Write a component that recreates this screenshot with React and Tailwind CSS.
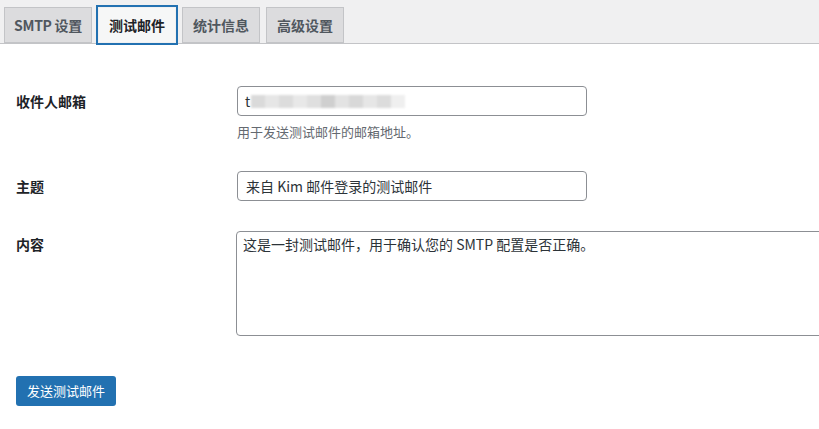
import React from 'react';

const font = { fontFamily: '"Noto Sans CJK SC", "Noto Sans", sans-serif' };

const tabs = ['SMTP 设置', '测试邮件', '统计信息', '高级设置'];

// blurred chunk shades for the masked address
const masked = ['#dadada', '#e6e6e6', '#dcdcdc', '#e8e8e8', '#dfdfdf', '#cfcfcf', '#e3e3e3', '#d8d8d8', '#e6e6e6', '#dcdcdc', '#efefef'];

const Tab = ({ label, active, first }) => (
  <div
    className={
      'h-[36px] flex items-center justify-center whitespace-nowrap text-[14px] font-semibold border border-[#c3c4c7] ' +
      (first ? 'w-[88px] px-0 tracking-[-0.3px] ' : 'px-[10px] ') +
      (active
        ? 'bg-[#f6f7f7] text-[#1d2327] border-[#f0f0f1] ring-2 ring-[#2271b1]'
        : 'bg-[#dcdcde] text-[#50575e]')
    }
  >
    {label}
  </div>
);

export default function App() {
  return (
    <div className="w-full min-h-screen bg-white overflow-hidden" style={font}>
      {/* Tabs */}
      <div className="bg-[#f0f0f1] border-b border-[#c3c4c7] pt-[7px] pl-[4px] flex gap-[6px]">
        {tabs.map((t, i) => (
          <Tab key={t} label={t} active={i === 1} first={i === 0} />
        ))}
      </div>

      {/* Form */}
      <div className="pl-4 pt-[42px] grid grid-cols-[221px_1fr] items-start">
        <div className="text-[14px] font-semibold text-[#1d2327] leading-[30px]">收件人邮箱</div>
        <div>
          <div className="w-[350px] h-[30px] border border-[#8c8f94] rounded-[4px] px-[7px] flex items-center text-[14px] text-[#2c3338]">
            <span>t</span>
            <span className="flex h-[13px] blur-[1px] ml-[1px]">
              {masked.map((c, i) => (
                <span key={i} className="w-[14px] h-full" style={{ backgroundColor: c }} />
              ))}
            </span>
          </div>
          <div className="mt-[6px] text-[13px] leading-[20px] text-[#646970]">用于发送测试邮件的邮箱地址。</div>
        </div>

        <div className="mt-[29px] text-[14px] font-semibold text-[#1d2327] leading-[30px]">主题</div>
        <div className="mt-[29px]">
          <input
            readOnly
            value="来自 Kim 邮件登录的测试邮件"
            className="w-[350px] h-[30px] border border-[#8c8f94] rounded-[4px] px-[8px] text-[14px] text-[#2c3338] outline-none"
            style={font}
          />
        </div>

        <div className="mt-[30px] text-[14px] font-semibold text-[#1d2327] leading-[26px]">内容</div>
        <div className="mt-[30px] -ml-px">
          <textarea
            readOnly
            value="这是一封测试邮件，用于确认您的 SMTP 配置是否正确。"
            className="block w-[640px] h-[105px] border border-[#8c8f94] rounded-[4px] px-[6px] py-[2px] text-[14px] leading-[20px] text-[#2c3338] resize-none outline-none"
            style={font}
          />
        </div>
      </div>

      <div className="pl-4 mt-[40px]">
        <button className="w-[100px] h-[30px] rounded-[3px] bg-[#2271b1] text-white text-[13px]">发送测试邮件</button>
      </div>
    </div>
  );
}
